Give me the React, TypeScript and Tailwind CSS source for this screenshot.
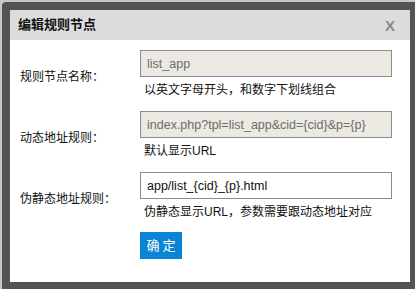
const font = "font-['Liberation_Sans','Noto_Sans_CJK_SC',sans-serif]";

const rows = [
  {
    label: "规则节点名称：",
    value: "list_app",
    hint: "以英文字母开头，和数字下划线组合",
    disabled: true,
  },
  {
    label: "动态地址规则：",
    value: "index.php?tpl=list_app&cid={cid}&p={p}",
    hint: "默认显示URL",
    disabled: true,
  },
  {
    label: "伪静态地址规则：",
    value: "app/list_{cid}_{p}.html",
    hint: "伪静态显示URL，参数需要跟动态地址对应",
    disabled: false,
  },
];

export default function App() {
  return (
    <div className={`w-[415px] h-[289px] overflow-hidden bg-[#c8c8c8] pl-[2px] pt-[2px] ${font}`}>
      <div className="w-[430px] h-[300px] rounded-tl-[4px] bg-[#545454] pl-[8px] pt-[8px]">
        <div className="w-[400px] h-[272px] bg-white">
          <div className="h-[30px] bg-[#dcdcdc] flex items-center justify-between pl-[8px] pr-[15px]">
            <h1 className="text-[13px] font-bold text-[#111]">编辑规则节点</h1>
            <span className="text-[15px] font-bold text-[#8a8a8a] leading-none">X</span>
          </div>

          <div className="pt-[10px] pl-[10px]">
            {rows.map((row) => (
              <div key={row.label} className="flex items-center h-[54px] mb-[7px]">
                <div className="w-[120px] text-[12px] text-[#111] -mt-[1px]">{row.label}</div>
                <div className="flex flex-col">
                  <input
                    readOnly
                    value={row.value}
                    disabled={row.disabled}
                    className={`w-[252px] h-[27px] border border-[#8c8c8c] px-[6px] text-[12.5px] outline-none ${font} ${
                      row.disabled ? "bg-[#ebe9e2] text-[#6d6d6d]" : "bg-white text-[#111]"
                    }`}
                  />
                  <p className="mt-[3px] pl-[4px] text-[12px] leading-[20px] text-[#111] pb-[4px]">{row.hint}</p>
                </div>
              </div>
            ))}
            <div className="pl-[120px] -mt-[1px]">
              <button className="w-[42px] h-[27px] bg-[#0a85d6] text-white text-[13px] tracking-[3px] pl-[3px]">
                确定
              </button>
            </div>
          </div>
        </div>
      </div>
    </div>
  );
}
